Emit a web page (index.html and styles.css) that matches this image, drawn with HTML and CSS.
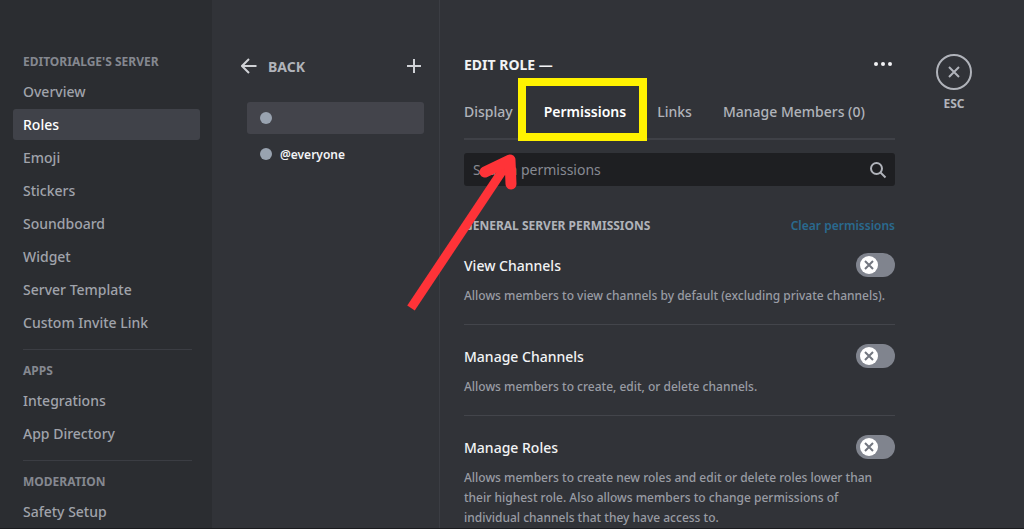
FILE: index.html
```html
<!DOCTYPE html>
<html lang="en">
<head>
  <meta charset="UTF-8">
  <title>Edit Role</title>
  <meta name="viewport" content="width=device-width, initial-scale=1.0">
  <link rel="stylesheet" href="styles.css">
</head>
<body>

<div class="settings">
  <nav class="sidebar">
    <h2>Editorialge's Server</h2>
    <a href="#">Overview</a>
    <a href="#" class="active">Roles</a>
    <a href="#">Emoji</a>
    <a href="#">Stickers</a>
    <a href="#">Soundboard</a>
    <a href="#">Widget</a>
    <a href="#">Server Template</a>
    <a href="#">Custom Invite Link</a>
    <hr>
    <h2>Apps</h2>
    <a href="#">Integrations</a>
    <a href="#">App Directory</a>
    <hr>
    <h2>Moderation</h2>
    <a href="#">Safety Setup</a>
  </nav>

  <section class="roles">
    <div class="roles-header">
      <button class="back">
        <svg width="16" height="16" viewBox="0 0 16 16"><path d="M15.500 8H1.500M8 1L1 8l7 7"/></svg>
        BACK
      </button>
      <button class="add" aria-label="Create role">
        <svg width="14" height="14" viewBox="0 0 14 14"><path d="M7 0v14M0 7h14"/></svg>
      </button>
    </div>
    <ul class="role-list">
      <li><button class="role selected" aria-label="New role"><span class="dot"></span></button></li>
      <li><button class="role"><span class="dot"></span>@everyone</button></li>
    </ul>
  </section>

  <main class="editor">
    <div class="editor-header">
      <h1>EDIT ROLE —</h1>
      <button class="more" aria-label="More">
        <svg width="20" height="6" viewBox="0 0 20 6"><circle cx="3" cy="3" r="2"/><circle cx="10" cy="3" r="2"/><circle cx="17" cy="3" r="2"/></svg>
      </button>
    </div>

    <div class="tabs">
      <button>Display</button>
      <button class="current">Permissions
        <span class="highlight"></span>
        <svg class="arrow" width="116" height="164" viewBox="0 0 116 164"><path class="shaft" d="M7 157L103 13"/><path class="head" d="M81 21L106 9L107 33"/></svg>
      </button>
      <button>Links</button>
      <button>Manage Members (0)</button>
    </div>

    <div class="search">
      <input type="text" placeholder="Search permissions" aria-label="Search permissions">
      <svg width="18" height="18" viewBox="0 0 18 18"><circle cx="7.500" cy="7.500" r="5.500"/><path d="M11.500 11.500l5 5"/></svg>
    </div>

    <div class="group-header">
      <h2>General Server Permissions</h2>
      <button class="clear">Clear permissions</button>
    </div>

    <div class="permission">
      <div class="permission-title">
        <label for="viewChannels">View Channels</label>
        <span class="switch">
          <input type="checkbox" id="viewChannels">
          <svg width="18" height="18" viewBox="0 0 18 18"><circle cx="9" cy="9" r="9"/><path d="M5 5l8 8M13 5l-8 8"/></svg>
        </span>
      </div>
      <p>Allows members to view channels by default (excluding private channels).</p>
    </div>

    <div class="permission">
      <div class="permission-title">
        <label for="manageChannels">Manage Channels</label>
        <span class="switch">
          <input type="checkbox" id="manageChannels">
          <svg width="18" height="18" viewBox="0 0 18 18"><circle cx="9" cy="9" r="9"/><path d="M5 5l8 8M13 5l-8 8"/></svg>
        </span>
      </div>
      <p>Allows members to create, edit, or delete channels.</p>
    </div>

    <div class="permission">
      <div class="permission-title">
        <label for="manageRoles">Manage Roles</label>
        <span class="switch">
          <input type="checkbox" id="manageRoles">
          <svg width="18" height="18" viewBox="0 0 18 18"><circle cx="9" cy="9" r="9"/><path d="M5 5l8 8M13 5l-8 8"/></svg>
        </span>
      </div>
      <p>Allows members to create new roles and edit or delete roles lower than their highest role. Also allows members to change permissions of individual channels that they have access to.</p>
    </div>
  </main>

  <aside class="close">
    <button>
      <svg width="36" height="36" viewBox="0 0 36 36"><circle cx="18" cy="18" r="17"/><path d="M13 13l10 10M23 13l-10 10"/></svg>
      ESC
    </button>
  </aside>
</div>

</body>
</html>
```
FILE: styles.css
```css
* {
  box-sizing: border-box;
}
body {
  margin: 0;
  font-family: "Noto Sans", sans-serif;
  font-size: 14px;
  background: #313338;
  color: #b0b3ba;
}
h1, h2, p, ul {
  margin: 0;
  padding: 0;
}
button {
  padding: 0;
  border: none;
  background: none;
  font: inherit;
  color: inherit;
  cursor: pointer;
}
svg {
  display: block;
  fill: none;
  stroke: currentColor;
  stroke-width: 2;
}
.settings {
  display: flex;
  height: 100vh;
  overflow: hidden;
  border-bottom: 1px solid #1b1c1f;
}

/* Left navigation */
.sidebar {
  flex: 0 0 212px;
  display: flex;
  flex-direction: column;
  gap: 2px;
  padding: 54px 12px 0 13px;
  background: #2b2d31;
}
.sidebar h2 {
  flex-shrink: 0;
  margin: 0 10px 4px;
  font-size: 12px;
  line-height: 16px;
  font-weight: 700;
  text-transform: uppercase;
  white-space: nowrap;
  color: #858890;
}
.sidebar a {
  flex-shrink: 0;
  padding: 0 10px;
  line-height: 31px;
  border-radius: 3px;
  font-weight: 500;
  color: #a0a3ab;
  text-decoration: none;
}
.sidebar a.active {
  background: #404249;
  color: #fff;
}
.sidebar hr {
  flex-shrink: 0;
  height: 1px;
  margin: 9px 8px 11px 10px;
  border: none;
  background: #3b3d43;
}

/* Role list */
.roles {
  flex: 0 0 228px;
  padding: 56px 15px 0 29px;
  border-right: 1px solid #3b3d43;
}
.roles-header {
  display: flex;
  justify-content: space-between;
  align-items: center;
  height: 20px;
  padding-right: 3px;
}
.back {
  display: flex;
  align-items: center;
  gap: 11px;
  font-weight: 700;
}
.back svg, .add svg {
  color: #d0d2d6;
}
.role-list {
  margin: 26px 0 0 6px;
  list-style: none;
}
.role {
  display: flex;
  align-items: center;
  gap: 8px;
  width: 100%;
  height: 32px;
  margin-bottom: 4px;
  padding-left: 13px;
  border-radius: 3px;
  font-size: 12px;
  font-weight: 600;
  color: #f2f3f5;
}
.role.selected {
  background: #43444b;
}
.dot {
  width: 12px;
  height: 12px;
  border-radius: 50%;
  background: #99a3b0;
}

/* Role editor */
.editor {
  flex: 1;
  min-width: 0;
  padding: 54px 0 0 24px;
}
.editor-header {
  display: flex;
  justify-content: space-between;
  align-items: center;
  height: 20px;
  padding-right: 2px;
}
.editor-header h1 {
  font-size: 14px;
  font-weight: 700;
  color: #f2f3f5;
}
.more svg {
  fill: #f2f3f5;
  stroke: none;
}
.tabs {
  display: flex;
  gap: 31px;
  height: 66px;
  padding-top: 12px;
  border-bottom: 2px solid #3f4147;
  white-space: nowrap;
}
.tabs button {
  position: relative;
  height: 52px;
  line-height: 52px;
  font-weight: 500;
}
.tabs .current {
  font-weight: 600;
  color: #fff;
}
.highlight {
  position: absolute;
  top: -8px;
  left: -26px;
  right: -21px;
  height: 63px;
  border: 8px solid #fff200;
}
.arrow {
  position: absolute;
  top: 65px;
  left: -140px;
  z-index: 1;
  color: #ff3338;
  pointer-events: none;
}
.shaft {
  stroke-width: 9;
}
.head {
  stroke-width: 11;
  stroke-linecap: round;
  stroke-linejoin: round;
}
.search {
  display: flex;
  align-items: center;
  height: 33px;
  margin-top: 13px;
  padding: 0 8px 0 9px;
  border-radius: 3px;
  background: #1e1f22;
}
.search input {
  flex: 1;
  min-width: 0;
  padding: 0;
  border: none;
  outline: none;
  background: none;
  font: inherit;
  color: #f2f3f5;
}
.search input::placeholder {
  color: #878a92;
  opacity: 1;
}
.group-header {
  display: flex;
  justify-content: space-between;
  align-items: center;
  height: 18px;
  margin-top: 30px;
}
.group-header h2 {
  font-size: 12px;
  font-weight: 700;
  text-transform: uppercase;
}
.clear {
  font-size: 12px;
  font-weight: 600;
  color: #2a6a8f;
}
.permission {
  padding: 19px 0 18px;
  border-bottom: 1px solid #43454b;
}
.permission-title {
  display: flex;
  justify-content: space-between;
  align-items: center;
  height: 24px;
  margin-bottom: 9px;
  font-weight: 500;
  color: #f2f3f5;
}
.permission p {
  padding-right: 4px;
  font-size: 12px;
  line-height: 20px;
  font-weight: 500;
  color: #999ca4;
}
.switch {
  position: relative;
}
.switch input {
  display: block;
  appearance: none;
  width: 39px;
  height: 24px;
  margin: 0;
  border-radius: 12px;
  background: #80848e;
  cursor: pointer;
}
.switch svg {
  position: absolute;
  top: 3px;
  left: 4px;
  color: #72767f;
  pointer-events: none;
}
.switch circle {
  fill: #fff;
  stroke: none;
}
.switch input:checked {
  background: #23a559;
}
.switch input:checked + svg {
  left: 17px;
}

/* Close button */
.close {
  flex: 0 0 129px;
  padding: 54px 0 0 41px;
}
.close button {
  display: flex;
  flex-direction: column;
  align-items: center;
  gap: 6px;
  font-size: 12px;
  line-height: 16px;
  font-weight: 700;
}
```
